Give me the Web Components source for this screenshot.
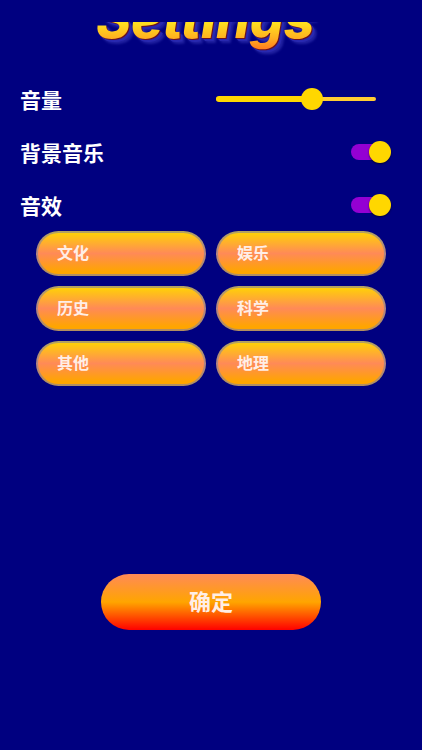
<!DOCTYPE html>
<html lang="zh-CN">

<head>
    <meta charset="UTF-8">
    <meta name="viewport" content="width=device-width, initial-scale=1.0">
    <title>Settings</title>
    <style>
        body {
            margin: 0;
            background: #000080;
            color: #fff;
            font-family: "Liberation Sans", "Noto Sans CJK SC", sans-serif;
        }
    </style>
</head>

<body>
    <settings-page>
        <settings-title slot="title">Settings</settings-title>
        <volume-slider label="音量" value="60"></volume-slider>
        <toggle-switch label="背景音乐"></toggle-switch>
        <toggle-switch label="音效"></toggle-switch>
        <category-button slot="category">文化</category-button>
        <category-button slot="category">娱乐</category-button>
        <category-button slot="category">历史</category-button>
        <category-button slot="category">科学</category-button>
        <category-button slot="category">其他</category-button>
        <category-button slot="category">地理</category-button>
        <confirm-button slot="action">确定</confirm-button>
    </settings-page>

    <template id="settings-page">
        <style>
            :host {
                display: flex;
                flex-direction: column;
                box-sizing: border-box;
                min-height: 100vh;
                padding: 22px 0 120px;
            }

            .rows {
                padding: 0 20px;
            }

            .categories {
                display: grid;
                grid-template-columns: 1fr 1fr;
                gap: 10px;
                margin: 0 36px;
            }

            .action {
                display: flex;
                justify-content: center;
                margin-top: auto;
            }
        </style>
        <header><slot name="title"></slot></header>
        <main class="rows"><slot></slot></main>
        <div class="categories"><slot name="category"></slot></div>
        <footer class="action"><slot name="action"></slot></footer>
    </template>

    <template id="settings-title">
        <style>
            :host {
                display: flex;
                justify-content: center;
                align-items: flex-end;
                height: 50px;
                overflow: hidden;
            }

            h1 {
                margin: 0;
                padding: 0 20px 27px 8px;
                font: italic 800 53px/52px Inter, sans-serif;
                color: transparent;
                background: linear-gradient(#ffe020 38%, #ffb020 57%, #ff7a20 72%);
                -webkit-background-clip: text;
                background-clip: text;
                filter: drop-shadow(1px 1px 0 #6a1020) drop-shadow(2px 2px 0 #2828b0) drop-shadow(2px 2px 1px #2020a0);
            }
        </style>
        <h1><slot></slot></h1>
    </template>

    <template id="volume-slider">
        <style>
            :host {
                display: flex;
                align-items: center;
                justify-content: space-between;
                height: 53px;
            }

            label {
                font-size: 21px;
                font-weight: bold;
            }

            .slider {
                display: grid;
                align-items: center;
                width: 42%;
                margin-right: 26px;
            }

            .rail,
            .fill,
            input {
                grid-area: 1 / 1;
            }

            .rail {
                height: 4px;
                border-radius: 2px;
                background: #fc3;
            }

            .fill {
                height: 6px;
                border-radius: 3px;
                background: #ffd700;
            }

            input {
                -webkit-appearance: none;
                appearance: none;
                height: 22px;
                margin: 0 -11px;
                background: none;
            }

            input::-webkit-slider-thumb {
                -webkit-appearance: none;
                width: 22px;
                height: 22px;
                border-radius: 50%;
                background: #ffd700;
            }
        </style>
        <label for="range"></label>
        <div class="slider">
            <span class="rail"></span>
            <span class="fill"></span>
            <input id="range" type="range" min="0" max="100">
        </div>
    </template>

    <template id="toggle-switch">
        <style>
            :host {
                display: flex;
                align-items: center;
                justify-content: space-between;
                height: 53px;
            }

            label {
                font-size: 21px;
                font-weight: bold;
            }

            input {
                -webkit-appearance: none;
                appearance: none;
                display: flex;
                align-items: center;
                width: 36px;
                height: 16px;
                margin: 0 15px 0 0;
                border-radius: 8px;
                background: #55557f;
            }

            input::before {
                content: "";
                flex: none;
                width: 22px;
                height: 22px;
                margin: 0 -4px;
                border-radius: 50%;
                background: #ffd700;
                box-shadow: 0 1px 2px rgba(0, 0, 0, .6);
            }

            input:checked {
                justify-content: flex-end;
                background: #9400d3;
            }
        </style>
        <label for="switch"></label>
        <input id="switch" type="checkbox" checked>
    </template>

    <template id="category-button">
        <style>
            :host {
                display: block;
            }

            button {
                display: block;
                width: 100%;
                height: 45px;
                padding: 0 19px 3px;
                border: 2px solid rgba(128, 128, 160, .6);
                border-radius: 23px;
                background: linear-gradient(#ffd700, #ff8a57 50%, #ffa500 90%) border-box;
                color: #ffeee6;
                font: bold 16px "Liberation Sans", "Noto Sans CJK SC", sans-serif;
                text-align: left;
            }
        </style>
        <button type="button"><slot></slot></button>
    </template>

    <template id="confirm-button">
        <style>
            :host {
                display: block;
                width: 52%;
            }

            button {
                display: block;
                width: 100%;
                height: 56px;
                padding: 0 0 4px;
                border: 0;
                border-radius: 28px;
                background: linear-gradient(#ff8a57, #ffa500 50%, #ff0000);
                color: #ffeee6;
                font: bold 22px "Liberation Sans", "Noto Sans CJK SC", sans-serif;
            }
        </style>
        <button type="button"><slot></slot></button>
    </template>

    <script>
        class TemplateElement extends HTMLElement {
            constructor() {
                super();
                var template = document.getElementById(this.localName);
                this.attachShadow({ mode: 'open' }).appendChild(template.content.cloneNode(true));
            }
        }

        class SettingsPage extends TemplateElement {}
        class SettingsTitle extends TemplateElement {}
        class CategoryButton extends TemplateElement {}
        class ConfirmButton extends TemplateElement {}

        class VolumeSlider extends TemplateElement {
            connectedCallback() {
                const input = this.shadowRoot.querySelector('input');
                const fill = this.shadowRoot.querySelector('.fill');
                const update = () => fill.style.width = `${input.value}%`;

                this.shadowRoot.querySelector('label').textContent = this.getAttribute('label');
                input.value = this.getAttribute('value');
                input.addEventListener('input', update);
                update();
            }
        }

        class ToggleSwitch extends TemplateElement {
            connectedCallback() {
                this.shadowRoot.querySelector('label').textContent = this.getAttribute('label');
            }
        }

        customElements.define('settings-page', SettingsPage);
        customElements.define('settings-title', SettingsTitle);
        customElements.define('volume-slider', VolumeSlider);
        customElements.define('toggle-switch', ToggleSwitch);
        customElements.define('category-button', CategoryButton);
        customElements.define('confirm-button', ConfirmButton);
    </script>

</body>

</html>
